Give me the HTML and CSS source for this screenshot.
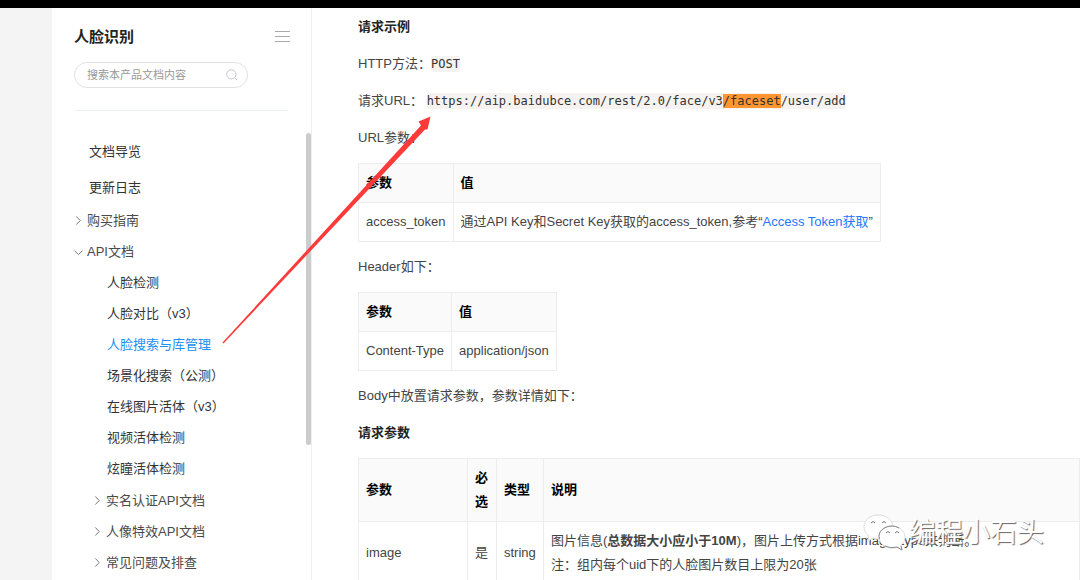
FILE: index.html
```html
<!DOCTYPE html>
<html lang="zh-CN">
<head>
<meta charset="utf-8">
<title>人脸识别</title>
<link rel="stylesheet" href="styles.css">
</head>
<body>
<div class="topbar"></div>
<div class="page">
  <div class="rail"></div>
  <aside class="sidebar">
    <div class="sidebar-head">
      <h1 class="product">人脸识别</h1>
      <button class="menu-button" type="button" aria-label="菜单">
        <svg width="15" height="12" viewBox="0 0 15 12" stroke="#aaa" fill="none"><path d="M0 .5h15M0 5.500h15M0 10.500h15"/></svg>
      </button>
    </div>
    <form class="search">
      <input class="search-input" type="search" aria-label="搜索" placeholder="搜索本产品文档内容">
      <button class="search-button" type="button" aria-label="搜索">
        <svg width="12" height="12" viewBox="0 0 12 12" stroke="#c3c6cb" fill="none"><circle cx="5.300" cy="5.300" r="4.600"/><path d="M8.600 8.600l2.600 2.600"/></svg>
      </button>
    </form>
    <nav class="nav">
      <a class="nav-top" href="#">文档导览</a>
      <a class="nav-top" href="#">更新日志</a>
      <a class="nav-group" href="#"><svg class="chevron" viewBox="0 0 10 10"><path d="M2.500 .5l4.500 4.500-4.500 4.500"/></svg>购买指南</a>
      <a class="nav-group" href="#"><svg class="chevron" viewBox="0 0 10 10"><path d="M.5 4l4.500 4.500 4.500-4.500"/></svg>API文档</a>
      <div class="nav-sub">
        <a class="nav-leaf" href="#">人脸检测</a>
        <a class="nav-leaf" href="#">人脸对比（v3）</a>
        <a class="nav-leaf active" href="#">人脸搜索与库管理</a>
        <a class="nav-leaf" href="#">场景化搜索（公测）</a>
        <a class="nav-leaf" href="#">在线图片活体（v3）</a>
        <a class="nav-leaf" href="#">视频活体检测</a>
        <a class="nav-leaf" href="#">炫瞳活体检测</a>
      </div>
      <div class="nav-sub nested">
        <a class="nav-group" href="#"><svg class="chevron" viewBox="0 0 10 10"><path d="M2.500 .5l4.500 4.500-4.500 4.500"/></svg>实名认证API文档</a>
        <a class="nav-group" href="#"><svg class="chevron" viewBox="0 0 10 10"><path d="M2.500 .5l4.500 4.500-4.500 4.500"/></svg>人像特效API文档</a>
        <a class="nav-group" href="#"><svg class="chevron" viewBox="0 0 10 10"><path d="M2.500 .5l4.500 4.500-4.500 4.500"/></svg>常见问题及排查</a>
      </div>
    </nav>
    <div class="scroll-thumb"></div>
  </aside>
  <main class="content">
    <h2>请求示例</h2>
    <p>HTTP方法：<code>POST</code></p>
    <p>请求URL： <code>https://aip.baidubce.com/rest/2.0/face/v3<mark>/faceset</mark>/user/add</code></p>
    <p>URL参数：</p>
    <table>
      <thead><tr><th>参数</th><th>值</th></tr></thead>
      <tbody><tr><td>access_token</td><td>通过API Key和Secret Key获取的access_token,参考“<a class="doc-link" href="#">Access Token获取</a>”</td></tr></tbody>
    </table>
    <p>Header如下：</p>
    <table>
      <thead><tr><th>参数</th><th>值</th></tr></thead>
      <tbody><tr><td>Content-Type</td><td>application/json</td></tr></tbody>
    </table>
    <p>Body中放置请求参数，参数详情如下：</p>
    <h2>请求参数</h2>
    <table class="params">
      <colgroup><col class="col-name"><col class="col-required"><col class="col-type"><col></colgroup>
      <thead><tr><th>参数</th><th>必选</th><th>类型</th><th>说明</th></tr></thead>
      <tbody><tr><td>image</td><td>是</td><td>string</td><td>图片信息(<strong>总数据大小应小于10M</strong>)，图片上传方式根据image_type来判断。<br>注：组内每个uid下的人脸图片数目上限为20张</td></tr></tbody>
    </table>
  </main>
</div>
<svg class="arrow" width="220" height="240" viewBox="0 0 220 240"><path d="M10.500 235.500L209 18.500 206.500 14.500 218.500 9.500 215.500 22.500 213 22.500 11.500 236.500Z" fill="#fd3a3a"/></svg>
<div class="watermark">
  <svg width="44" height="38" viewBox="0 0 44 38" fill="#fff"><path stroke="#ddd" d="M15 1C7 1 1 6 1 13c0 4 2 7 5 9l-1 5 5-3c2 1 4 1 7 1 7 0 13-5 13-12S23 1 15 1z"/><path stroke="#ddd" d="M29 12c-7 0-13 5-13 11s6 11 13 11c2 0 4 0 5-1l5 3-1-5c3-2 4-5 4-8 0-6-6-11-13-11z"/><path fill="none" stroke="#888" d="M16.500 25C14 18 21 12 29 12q4 0 7 2M22 32q6 3 12 1l5 3-1-4"/><path fill="none" stroke="#777" d="M8 9q2-3 4 0M19 9q2-3 4 0M23 19q2-3 4 0M32 19q2-3 4 0"/></svg>
  <span>编程小石头</span>
</div>
</body>
</html>
```
FILE: styles.css
```css
* { box-sizing: border-box; }
body {
  margin: 0;
  height: 100vh;
  overflow: hidden;
  display: flex;
  flex-direction: column;
  position: relative;
  background: #fff;
  color: #444;
  font: 13px/24px "Liberation Sans", "Noto Sans CJK SC", sans-serif;
}
a { text-decoration: none; color: inherit; }
button { border: 0; padding: 0; background: none; display: flex; }
.topbar { height: 8px; flex: none; background: #000; }
.page { flex: 1; min-height: 0; display: flex; }
.rail { width: 52px; flex: none; background: #f4f4f4; }
.sidebar {
  position: relative;
  width: 260px;
  flex: none;
  padding: 17px 23px 0 22px;
  border-right: 1px solid #f0f0f0;
}
.sidebar-head { display: flex; justify-content: space-between; align-items: center; }
.product { margin: 0; font-size: 15px; line-height: 24px; color: #222; }
.menu-button { margin-right: -2px; }
.search {
  display: flex;
  align-items: center;
  width: 174px;
  height: 26px;
  margin-top: 13px;
  padding: 0 9px 0 12px;
  border: 1px solid #e2e2e2;
  border-radius: 13px;
}
.search-input {
  flex: 1;
  min-width: 0;
  padding: 0;
  border: 0;
  outline: 0;
  background: none;
  font: 11px/16px "Liberation Sans", "Noto Sans CJK SC", sans-serif;
}
.search-input::placeholder { color: #999; }
.nav {
  margin-top: 22px;
  padding-top: 23px;
  border-top: 1px solid #e9f1f8;
  color: #333;
}
.nav-top { display: block; padding-left: 15px; line-height: 36px; }
.nav-top + .nav-group { margin-top: -1px; }
.nav-group { display: flex; align-items: center; gap: 4px; line-height: 31px; color: #4a4a4a; }
.nav-leaf { display: block; padding-left: 33px; line-height: 31px; }
.nested { padding: 1px 0 0 19px; }
.active { color: #2090f0; }
.chevron { width: 9px; height: 9px; fill: none; stroke: #666; }
.scroll-thumb {
  position: absolute;
  top: 125px;
  right: 0;
  width: 5px;
  height: 312px;
  border-radius: 3px;
  background: #ccc;
}
.content { flex: 1; min-width: 0; padding: 7px 0 0 46px; }
h2 { margin: 0 0 13px; font-size: 13px; line-height: 24px; color: #222; }
p { margin: 0 0 13px; }
code {
  padding: 1px 0;
  border-radius: 3px;
  background: #f6f2ef;
  color: #333;
  font: 12px/16px "DejaVu Sans Mono", monospace;
}
mark { background: #ff9632; color: inherit; }
table { border-collapse: collapse; margin-bottom: 13px; }
th, td { border: 1px solid #ededed; padding: 7px; text-align: left; }
th { background: #fafafa; color: #000; }
.doc-link { color: #2378ff; }
.params { width: 100%; table-layout: fixed; }
.col-name { width: 109px; }
.col-required { width: 29px; }
.col-type { width: 47px; }
.arrow { position: absolute; left: 212px; top: 107px; pointer-events: none; }
.watermark {
  position: absolute;
  right: 36px;
  bottom: 28px;
  display: flex;
  align-items: center;
  gap: 2px;
  color: #fff;
  font-size: 27px;
  line-height: 38px;
  text-shadow: 1px 1px 1px #666;
}
```
